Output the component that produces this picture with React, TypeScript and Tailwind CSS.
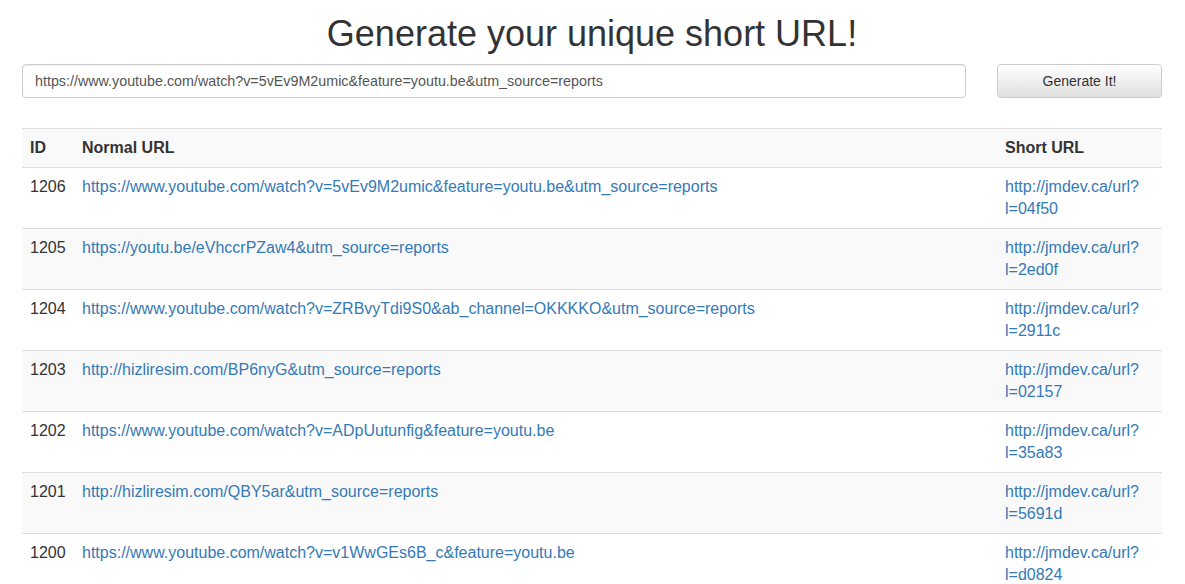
import React from "react";

const rows = [
  { id: 1206, url: "https://www.youtube.com/watch?v=5vEv9M2umic&feature=youtu.be&utm_source=reports", code: "04f50" },
  { id: 1205, url: "https://youtu.be/eVhccrPZaw4&utm_source=reports", code: "2ed0f" },
  { id: 1204, url: "https://www.youtube.com/watch?v=ZRBvyTdi9S0&ab_channel=OKKKKO&utm_source=reports", code: "2911c" },
  { id: 1203, url: "http://hizliresim.com/BP6nyG&utm_source=reports", code: "02157" },
  { id: 1202, url: "https://www.youtube.com/watch?v=ADpUutunfig&feature=youtu.be", code: "35a83" },
  { id: 1201, url: "http://hizliresim.com/QBY5ar&utm_source=reports", code: "5691d" },
  { id: 1200, url: "https://www.youtube.com/watch?v=v1WwGEs6B_c&feature=youtu.be", code: "d0824" },
];

export default function App() {
  return (
    <div className="min-h-screen bg-white text-[#333] font-['Liberation_Sans',Arial,sans-serif]">
      <div className="w-[1140px] ml-[22px]">
        <h1 className="mt-[14px] mb-[10px] text-center text-[36px] leading-[40px] font-normal text-[#333]">
          Generate your unique short URL!
        </h1>
        <div className="flex items-start gap-[31px]">
          <input
            defaultValue="https://www.youtube.com/watch?v=5vEv9M2umic&feature=youtu.be&utm_source=reports"
            className="w-[944px] h-[34px] px-[12px] text-[14.3px] text-[#555] border border-[#ccc] rounded-[4px] shadow-[inset_0_1px_1px_rgba(0,0,0,0.075)] outline-none"
          />
          <button className="w-[165px] h-[34px] text-[14px] text-[#333] border border-[#ccc] rounded-[4px] bg-gradient-to-b from-white to-[#e0e0e0] shadow-[0_1px_0_rgba(255,255,255,0.15),inset_0_1px_0_rgba(255,255,255,0.15)]">
            Generate It!
          </button>
        </div>
        <table className="mt-[30px] w-full border-collapse text-[16px] leading-[22px]">
          <thead>
            <tr className="bg-[#f9f9f9] border-t border-b border-[#ddd]">
              <th className="w-[52px] p-[8px] text-left font-bold align-bottom">ID</th>
              <th className="p-[8px] text-left font-bold align-bottom">Normal URL</th>
              <th className="w-[165px] p-[8px] text-left font-bold align-bottom">Short URL</th>
            </tr>
          </thead>
          <tbody>
            {rows.map((r, i) => (
              <tr key={r.id} className={`border-b border-[#ddd] ${i % 2 === 1 ? "bg-[#f9f9f9]" : "bg-white"}`}>
                <td className="p-[8px] align-top">{r.id}</td>
                <td className="p-[8px] align-top">
                  <a className="text-[#337ab7]" href="#">{r.url}</a>
                </td>
                <td className="p-[8px] align-top">
                  <a className="text-[#337ab7] break-all" href="#">
                    http://jmdev.ca/url?<br />l={r.code}
                  </a>
                </td>
              </tr>
            ))}
          </tbody>
        </table>
      </div>
    </div>
  );
}
